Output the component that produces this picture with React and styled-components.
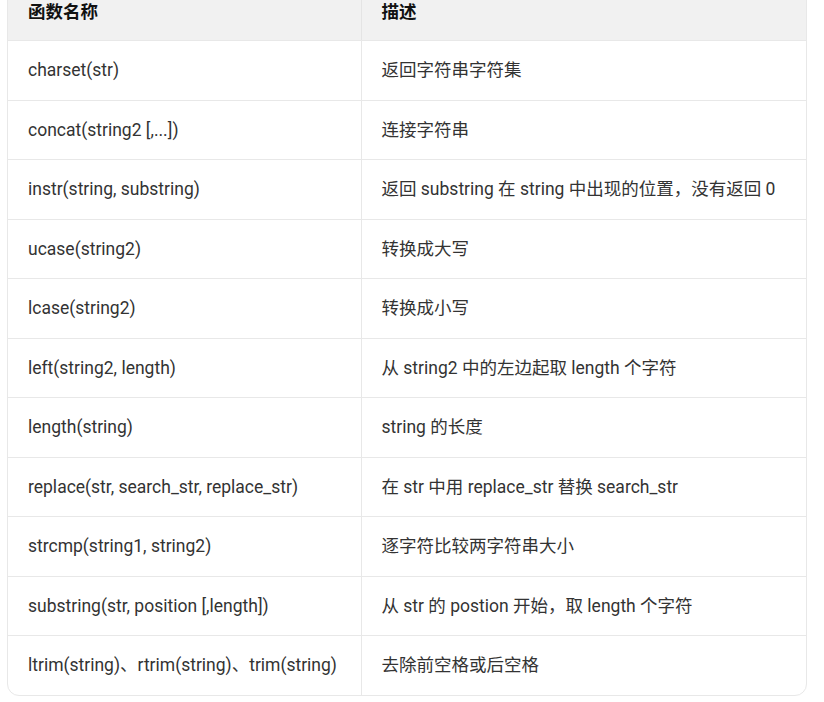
import styled, { createGlobalStyle } from "styled-components";

const GlobalStyle = createGlobalStyle`
  html, body {
    margin: 0;
    padding: 0;
    background: #ffffff;
  }
  body {
    font-family: Roboto, "Noto Sans CJK SC", sans-serif;
    overflow: hidden;
  }
`;

const Page = styled.div`
  width: 824px;
  height: 702px;
  overflow: hidden;
`;

const TableWrap = styled.div`
  margin: -20px 0 0 7px;
  width: 798px;
  border: 1px solid #e8e8e8;
  border-radius: 12px;
  overflow: hidden;
`;

const Table = styled.table`
  width: 100%;
  border-collapse: collapse;
  table-layout: fixed;
`;

const HeadCell = styled.th`
  height: 59.5px;
  padding: 0 20px;
  box-sizing: border-box;
  background: #f1f1f1;
  color: #111111;
  font-size: 17.5px;
  font-weight: 700;
  text-align: left;
  vertical-align: middle;
  border-bottom: 1px solid #e8e8e8;
  border-left: ${(p) => (p.$first ? "none" : "1px solid #e4e4e4")};
`;

const Row = styled.tr`
  &:not(:last-child) td {
    border-bottom: 1px solid #e8e8e8;
  }
`;

const Cell = styled.td`
  height: 59.5px;
  padding: 0 20px;
  box-sizing: border-box;
  color: #333333;
  font-size: 17.5px;
  line-height: 1.4;
  white-space: nowrap;
  vertical-align: middle;
  border-left: ${(p) => (p.$first ? "none" : "1px solid #e8e8e8")};
`;

const rows = [
  ["charset(str)", "返回字符串字符集"],
  ["concat(string2 [,...])", "连接字符串"],
  ["instr(string, substring)", "返回 substring 在 string 中出现的位置，没有返回 0"],
  ["ucase(string2)", "转换成大写"],
  ["lcase(string2)", "转换成小写"],
  ["left(string2, length)", "从 string2 中的左边起取 length 个字符"],
  ["length(string)", "string 的长度"],
  ["replace(str, search_str, replace_str)", "在 str 中用 replace_str 替换 search_str"],
  ["strcmp(string1, string2)", "逐字符比较两字符串大小"],
  ["substring(str, position [,length])", "从 str 的 postion 开始，取 length 个字符"],
  ["ltrim(string)、rtrim(string)、trim(string)", "去除前空格或后空格"],
];

export default function App() {
  return (
    <Page>
      <GlobalStyle />
      <TableWrap>
        <Table>
          <colgroup>
            <col style={{ width: "353px" }} />
            <col />
          </colgroup>
          <thead>
            <tr>
              <HeadCell $first>函数名称</HeadCell>
              <HeadCell>描述</HeadCell>
            </tr>
          </thead>
          <tbody>
            {rows.map(([name, desc]) => (
              <Row key={name}>
                <Cell $first>{name}</Cell>
                <Cell>{desc}</Cell>
              </Row>
            ))}
          </tbody>
        </Table>
      </TableWrap>
    </Page>
  );
}
